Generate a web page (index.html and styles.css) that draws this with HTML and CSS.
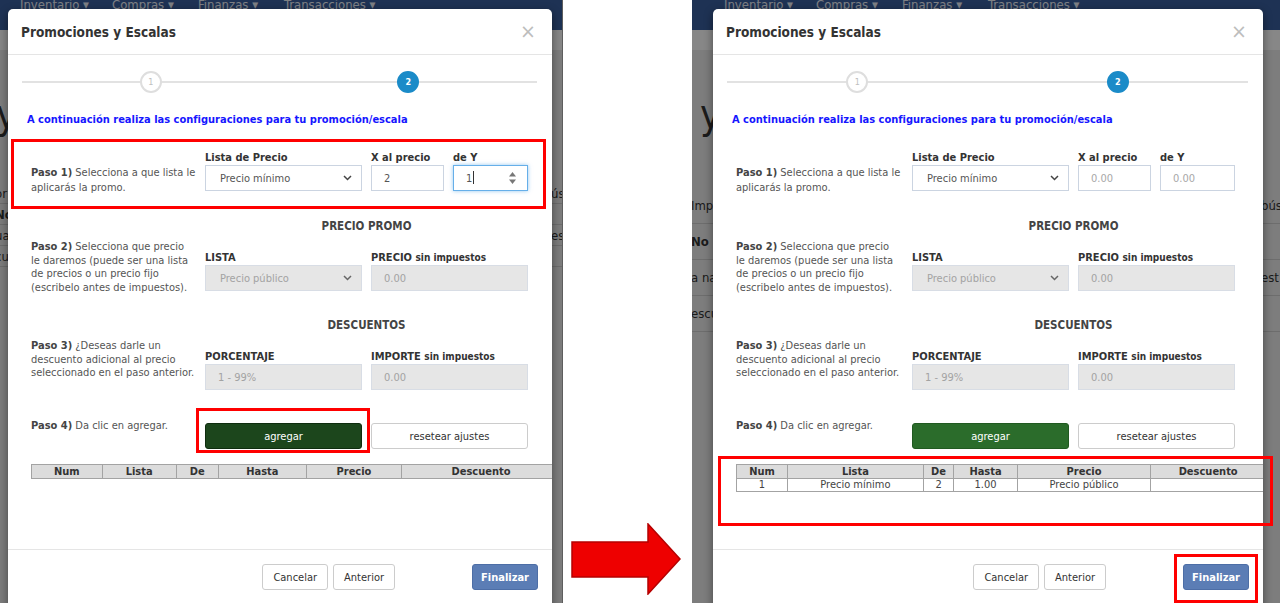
FILE: index.html
```html
<!DOCTYPE html>
<html lang="es">
<head>
    <meta charset="UTF-8">
    <title>Promociones y Escalas</title>
    <link rel="stylesheet" href="styles.css">
</head>
<body>
<div class="canvas">

    <!-- antes -->
    <section class="shot shot-before">
        <div class="app">
            <nav class="app-nav">
                <span>Inventario ▾</span>
                <span>Compras ▾</span>
                <span>Finanzas ▾</span>
                <span>Transacciones ▾</span>
            </nav>
            <div class="app-bar"></div>
            <div class="app-title">y</div>
            <div class="app-row"><span class="cut-l">or</span><span class="cut-r">úsq</span></div>
            <div class="app-row app-row-bold"><span class="cut-l">No</span><span class="cut-r"></span></div>
            <div class="app-row"><span class="cut-l">ua</span><span class="cut-r">est</span></div>
            <div class="app-row"><span class="cut-l">cu</span><span class="cut-r"></span></div>
        </div>
        <div class="backdrop"></div>

        <div class="modal">
            <div class="modal-header">
                <h4 class="modal-title">Promociones y Escalas</h4>
                <span class="close">×</span>
            </div>
            <div class="modal-body">
                <div class="stepper">
                    <div class="stepper-half"><span class="dot">1</span></div>
                    <div class="stepper-half"><span class="dot dot-active">2</span></div>
                </div>
                <p class="intro">A continuación realiza las configuraciones para tu promoción/escala</p>

                <div class="step">
                    <p class="desc"><b>Paso 1)</b> Selecciona a que lista le<br>aplicarás la promo.</p>
                    <div class="fields">
                        <div class="field w-main">
                            <span class="field-label">Lista de Precio</span>
                            <div class="control control-select">Precio mínimo
                                <svg class="chevron" width="9" height="6" viewBox="0 0 9 6"><polyline points="1,1 4.5,4.5 8,1" fill="none" stroke="#444" stroke-width="1.5"/></svg>
                            </div>
                        </div>
                        <div class="field w-x">
                            <span class="field-label">X al precio</span>
                            <div class="control">2</div>
                        </div>
                        <div class="field w-y">
                            <span class="field-label">de Y</span>
                            <div class="control control-focus">
                                <span>1<span class="caret"></span></span>
                                <svg width="9" height="14" viewBox="0 0 9 14"><polygon points="4.5,1 8,5.5 1,5.5" fill="#777"/><polygon points="1,8.5 8,8.5 4.5,13" fill="#777"/></svg>
                            </div>
                        </div>
                    </div>
                </div>

                <div class="step step-sec">
                    <p class="desc"><b>Paso 2)</b> Selecciona que precio<br>le daremos (puede ser una lista<br>de precios o un precio fijo<br>(escribelo antes de impuestos).</p>
                    <div class="block">
                        <h5 class="block-title">PRECIO PROMO</h5>
                        <div class="fields">
                            <div class="field w-main">
                                <span class="field-label">LISTA</span>
                                <div class="control control-select control-off">Precio público
                                    <svg class="chevron" width="9" height="6" viewBox="0 0 9 6"><polyline points="1,1 4.5,4.5 8,1" fill="none" stroke="#666" stroke-width="1.5"/></svg>
                                </div>
                            </div>
                            <div class="field w-half">
                                <span class="field-label">PRECIO <small>sin impuestos</small></span>
                                <div class="control control-off">0.00</div>
                            </div>
                        </div>
                    </div>
                </div>

                <div class="step step-sec">
                    <p class="desc"><b>Paso 3)</b> ¿Deseas darle un<br>descuento adicional al precio<br>seleccionado en el paso anterior.</p>
                    <div class="block">
                        <h5 class="block-title">DESCUENTOS</h5>
                        <div class="fields">
                            <div class="field w-main">
                                <span class="field-label">PORCENTAJE</span>
                                <div class="control control-off">1 - 99%</div>
                            </div>
                            <div class="field w-half">
                                <span class="field-label">IMPORTE <small>sin impuestos</small></span>
                                <div class="control control-off">0.00</div>
                            </div>
                        </div>
                    </div>
                </div>

                <div class="step step-add">
                    <p class="desc"><b>Paso 4)</b> Da clic en agregar.</p>
                    <div class="fields">
                        <button class="btn btn-add btn-add-pressed">agregar</button>
                        <button class="btn btn-reset">resetear ajustes</button>
                    </div>
                </div>

                <table class="grid">
                    <tr><th>Num</th><th>Lista</th><th>De</th><th>Hasta</th><th>Precio</th><th>Descuento</th></tr>
                </table>
            </div>
            <div class="modal-footer">
                <button class="btn">Cancelar</button>
                <button class="btn">Anterior</button>
                <button class="btn btn-primary">Finalizar</button>
            </div>
        </div>

        <div class="mark mark-paso1"></div>
        <div class="mark mark-add"></div>
    </section>

    <div class="gutter">
        <svg class="arrow" width="110" height="72" viewBox="0 0 110 72">
            <polygon points="1,19 77,19 77,1 109,36 77,71 77,54 1,54" fill="#ee0000" stroke="#b50000" stroke-width="1.5"/>
        </svg>
    </div>

    <!-- despues -->
    <section class="shot shot-after">
        <div class="app">
            <nav class="app-nav">
                <span>Inventario ▾</span>
                <span>Compras ▾</span>
                <span>Finanzas ▾</span>
                <span>Transacciones ▾</span>
            </nav>
            <div class="app-bar"></div>
            <div class="app-title">y</div>
            <div class="app-row"><span class="cut-l">Impr</span><span class="cut-r">búsq</span></div>
            <div class="app-row app-row-bold"><span class="cut-l">No</span><span class="cut-r"></span></div>
            <div class="app-row"><span class="cut-l">a na</span><span class="cut-r">est</span></div>
            <div class="app-row"><span class="cut-l">escu</span><span class="cut-r"></span></div>
        </div>
        <div class="backdrop"></div>

        <div class="modal">
            <div class="modal-header">
                <h4 class="modal-title">Promociones y Escalas</h4>
                <span class="close">×</span>
            </div>
            <div class="modal-body">
                <div class="stepper">
                    <div class="stepper-half"><span class="dot">1</span></div>
                    <div class="stepper-half"><span class="dot dot-active">2</span></div>
                </div>
                <p class="intro">A continuación realiza las configuraciones para tu promoción/escala</p>

                <div class="step">
                    <p class="desc"><b>Paso 1)</b> Selecciona a que lista le<br>aplicarás la promo.</p>
                    <div class="fields">
                        <div class="field w-main">
                            <span class="field-label">Lista de Precio</span>
                            <div class="control control-select">Precio mínimo
                                <svg class="chevron" width="9" height="6" viewBox="0 0 9 6"><polyline points="1,1 4.5,4.5 8,1" fill="none" stroke="#444" stroke-width="1.5"/></svg>
                            </div>
                        </div>
                        <div class="field w-x">
                            <span class="field-label">X al precio</span>
                            <div class="control control-empty">0.00</div>
                        </div>
                        <div class="field w-y">
                            <span class="field-label">de Y</span>
                            <div class="control control-empty">0.00</div>
                        </div>
                    </div>
                </div>

                <div class="step step-sec">
                    <p class="desc"><b>Paso 2)</b> Selecciona que precio<br>le daremos (puede ser una lista<br>de precios o un precio fijo<br>(escribelo antes de impuestos).</p>
                    <div class="block">
                        <h5 class="block-title">PRECIO PROMO</h5>
                        <div class="fields">
                            <div class="field w-main">
                                <span class="field-label">LISTA</span>
                                <div class="control control-select control-off">Precio público
                                    <svg class="chevron" width="9" height="6" viewBox="0 0 9 6"><polyline points="1,1 4.5,4.5 8,1" fill="none" stroke="#666" stroke-width="1.5"/></svg>
                                </div>
                            </div>
                            <div class="field w-half">
                                <span class="field-label">PRECIO <small>sin impuestos</small></span>
                                <div class="control control-off">0.00</div>
                            </div>
                        </div>
                    </div>
                </div>

                <div class="step step-sec">
                    <p class="desc"><b>Paso 3)</b> ¿Deseas darle un<br>descuento adicional al precio<br>seleccionado en el paso anterior.</p>
                    <div class="block">
                        <h5 class="block-title">DESCUENTOS</h5>
                        <div class="fields">
                            <div class="field w-main">
                                <span class="field-label">PORCENTAJE</span>
                                <div class="control control-off">1 - 99%</div>
                            </div>
                            <div class="field w-half">
                                <span class="field-label">IMPORTE <small>sin impuestos</small></span>
                                <div class="control control-off">0.00</div>
                            </div>
                        </div>
                    </div>
                </div>

                <div class="step step-add">
                    <p class="desc"><b>Paso 4)</b> Da clic en agregar.</p>
                    <div class="fields">
                        <button class="btn btn-add">agregar</button>
                        <button class="btn btn-reset">resetear ajustes</button>
                    </div>
                </div>

                <table class="grid">
                    <tr><th>Num</th><th>Lista</th><th>De</th><th>Hasta</th><th>Precio</th><th>Descuento</th></tr>
                    <tr><td>1</td><td>Precio mínimo</td><td>2</td><td>1.00</td><td>Precio público</td><td></td></tr>
                </table>
            </div>
            <div class="modal-footer">
                <button class="btn">Cancelar</button>
                <button class="btn">Anterior</button>
                <button class="btn btn-primary">Finalizar</button>
            </div>
        </div>

        <div class="mark mark-table"></div>
        <div class="mark mark-finish"></div>
    </section>

</div>
</body>
</html>
```

FILE: styles.css
```css
* {
    box-sizing: border-box;
}

body {
    margin: 0;
    background: #fff;
    font-family: "DejaVu Sans Condensed", "DejaVu Sans", sans-serif;
    font-size: 11px;
    color: #555;
}

.canvas {
    display: flex;
    width: 1280px;
    height: 603px;
    overflow: hidden;
}

.shot {
    position: relative;
    flex: none;
    height: 603px;
    overflow: hidden;
}

.shot-before {
    width: 563px;
    border-right: 1px solid #5e5e5e;
}

.shot-after {
    width: 588px;
}

.gutter {
    flex: none;
    width: 129px;
    display: flex;
    align-items: flex-end;
    padding: 0 0 8px 8px;
}

/* page behind the modal */
.app {
    height: 100%;
    background: #ededed;
    color: #333;
}

.app-nav {
    display: flex;
    height: 30px;
    padding-left: 32px;
    background: #3a5f9f;
    color: #eef2fa;
    font-size: 13px;
    line-height: 16px;
    overflow: hidden;
}

.app-nav span {
    width: 86px;
    margin-top: -3px;
    white-space: nowrap;
}

.app-nav span:first-child {
    width: 92px;
}

.shot-before .app-nav {
    padding-left: 20px;
}

.app-bar {
    height: 20px;
    background: #fff;
}

.app-title {
    height: 138px;
    padding-top: 44px;
    padding-left: 8px;
    font-size: 40px;
    line-height: 1;
}

.shot-before .app-title {
    height: 133px;
    padding-left: 0;
    margin-left: -4px;
}

.app-row {
    display: flex;
    justify-content: space-between;
    align-items: center;
    height: 36px;
    border-bottom: 1px solid #cfcfcf;
    font-size: 13px;
    white-space: nowrap;
}

.app-row:first-of-type {
    height: 27px;
}

.app-row-bold {
    font-weight: bold;
}

.shot-before .app-row {
    height: 21px;
}

.cut-l {
    margin-left: -1px;
}

.shot-before .cut-l {
    margin-left: -5px;
}

.cut-r {
    width: 19px;
    overflow: hidden;
}

.shot-before .cut-r {
    width: 11px;
}

.backdrop {
    position: absolute;
    inset: 0;
    background: rgba(0, 0, 0, .47);
}

/* modal */
.modal {
    position: absolute;
    top: 9px;
    height: 620px;
    display: flex;
    flex-direction: column;
    background: #fff;
    border-radius: 5px;
    box-shadow: 0 3px 10px rgba(0, 0, 0, .45);
    overflow: hidden;
}

.shot-before .modal {
    left: 8px;
    width: 544px;
}

.shot-after .modal {
    left: 21px;
    width: 550px;
}

.modal-header {
    flex: none;
    height: 46px;
    display: flex;
    align-items: center;
    justify-content: space-between;
    padding: 0 16px 0 13px;
    border-bottom: 1px solid #e5e5e5;
}

.modal-title {
    margin: 0;
    font-size: 13.5px;
    font-weight: bold;
    color: #333;
}

.close {
    font-family: "DejaVu Sans", sans-serif;
    font-size: 19px;
    line-height: 1;
    color: #bdbdbd;
}

.modal-body {
    flex: none;
    height: 494px;
    padding: 16px 15px 0 14px;
}

.stepper {
    display: flex;
    height: 22px;
    background: linear-gradient(#e2e2e2, #e2e2e2) center / 100% 2px no-repeat;
}

.stepper-half {
    flex: 1;
    display: flex;
    justify-content: center;
    align-items: center;
}

.dot {
    width: 22px;
    height: 22px;
    display: flex;
    align-items: center;
    justify-content: center;
    border: 2px solid #dedede;
    border-radius: 50%;
    background: #fff;
    color: #c0c0c0;
    font-size: 9px;
}

.dot-active {
    background: #1b8bc8;
    border-color: #1b8bc8;
    color: #fff;
    font-weight: bold;
}

.intro {
    margin: 20px 0 0 5px;
    font-size: 11px;
    font-weight: bold;
    line-height: 14px;
    color: #1616ff;
}

.step {
    display: flex;
    margin-top: 23px;
    padding: 0 13px 0 9px;
}

.desc {
    flex: none;
    width: 176px;
    margin: 15px 0 0;
    line-height: 15px;
    white-space: nowrap;
}

.shot-before .desc {
    width: 174px;
}

.desc b {
    color: #444;
}

.step-sec {
    margin-top: 24px;
}

.step-sec + .step-sec {
    margin-top: 24px;
}

.step-sec .desc {
    margin-top: 21px;
    line-height: 13.5px;
}

.block {
    flex: 1;
}

.block-title {
    margin: 0 0 17px;
    text-align: center;
    font-size: 11.5px;
    line-height: 14px;
    color: #444;
}

.fields {
    display: flex;
    gap: 9px;
}

.field {
    display: flex;
    flex-direction: column;
}

.field-label {
    font-size: 11px;
    font-weight: bold;
    line-height: 15px;
    color: #333;
    white-space: nowrap;
}

.field-label small {
    font-size: 10px;
}

.w-main {
    width: 157px;
}

.w-x {
    width: 73px;
}

.w-y {
    width: 75px;
}

.w-half {
    width: 157px;
}

.control {
    height: 26px;
    display: flex;
    align-items: center;
    padding: 0 12px;
    border: 1px solid #cbd4e1;
    background: #fff;
    color: #555;
    font-size: 11px;
    white-space: nowrap;
}

.control-select {
    justify-content: space-between;
    padding: 0 9px 0 14px;
}

.control-empty {
    color: #a8a8a8;
}

.control-off {
    background: #e6e6e6;
    border-color: #d8dde5;
    color: #a3a3a3;
}

.control-focus {
    justify-content: space-between;
    padding-right: 10px;
    border-color: #66afe9;
    box-shadow: 0 0 4px rgba(102, 175, 233, .7);
}

.caret {
    display: inline-block;
    width: 1px;
    height: 13px;
    margin-left: 1px;
    vertical-align: -2px;
    background: #333;
}

.step-add {
    margin-top: 29px;
}

.step-add .desc {
    margin-top: 0;
    line-height: 14px;
}

.step-add .fields {
    margin-top: 4px;
}

.btn {
    height: 26px;
    padding: 0 10px;
    border: 1px solid #ccc;
    border-radius: 3px;
    background: #fff;
    color: #333;
    font-family: inherit;
    font-size: 11px;
}

.btn-add {
    width: 157px;
    background: #2b6c2b;
    border-color: #215a21;
    color: #fff;
}

.btn-add-pressed {
    background: #1c461c;
    border-color: #0f2d0f;
}

.btn-reset {
    width: 157px;
}

.grid {
    width: 530px;
    margin: 15px 0 0 9px;
    border-collapse: collapse;
}

.grid th {
    padding: 0;
    border: 1px solid #a3a3a3;
    background: #dcdcdc;
    font-size: 11px;
    line-height: 13px;
    color: #333;
}

.grid td {
    padding: 0;
    border: 1px solid #a3a3a3;
    font-size: 11px;
    line-height: 12px;
    text-align: center;
    color: #444;
}

.modal-footer {
    flex: none;
    display: flex;
    justify-content: flex-end;
    gap: 5px;
    padding: 14px 14px 0;
    border-top: 1px solid #e5e5e5;
}

.btn-primary {
    margin-left: 72px;
    padding: 0 8px;
    background: #5b7db5;
    border-color: #4d6ea6;
    color: #fff;
    font-weight: bold;
}

/* red annotations */
.mark {
    position: absolute;
    border: 3px solid #f00;
}

.mark-paso1 {
    left: 11px;
    top: 139px;
    width: 535px;
    height: 70px;
}

.mark-add {
    left: 196px;
    top: 408px;
    width: 174px;
    height: 45px;
}

.mark-table {
    left: 26px;
    top: 456px;
    width: 555px;
    height: 70px;
}

.mark-finish {
    left: 482px;
    top: 554px;
    width: 84px;
    height: 49px;
}
```
